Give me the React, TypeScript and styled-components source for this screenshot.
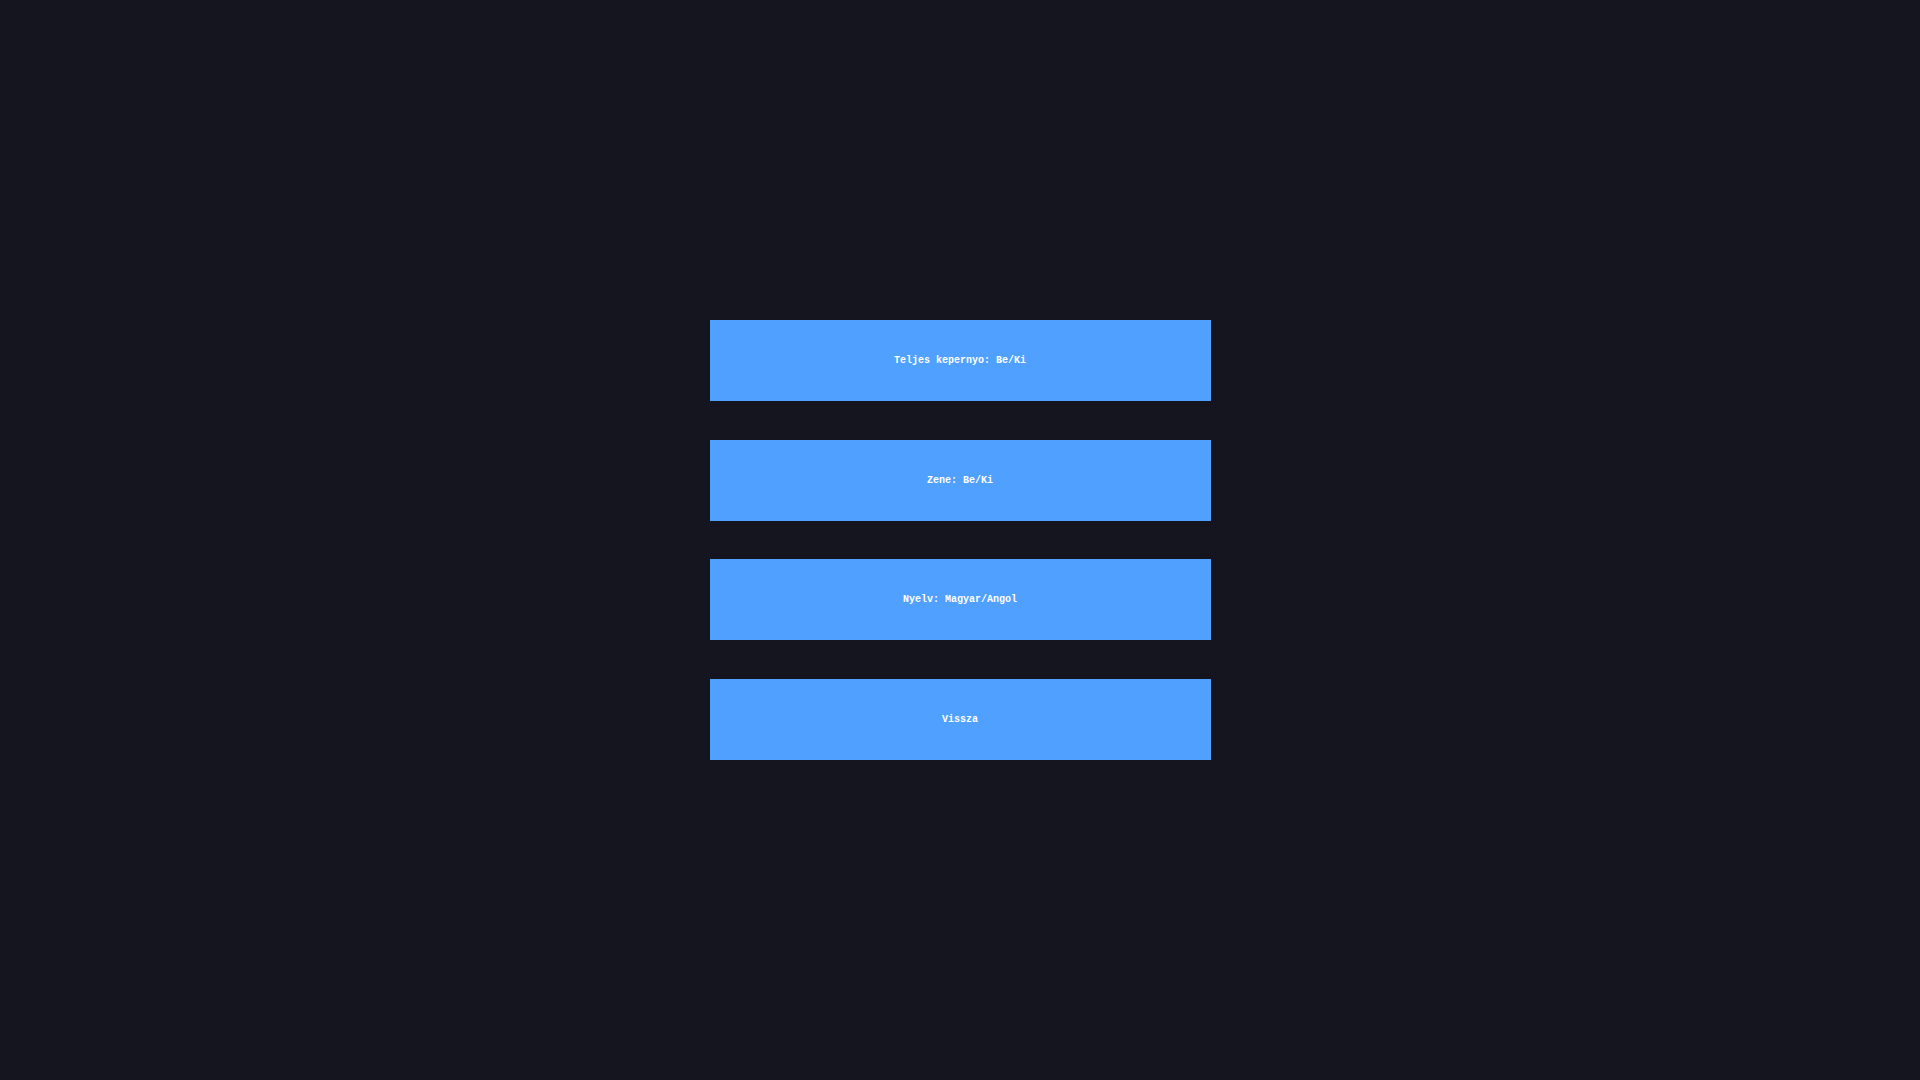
import React from "react";
import styled, { createGlobalStyle } from "styled-components";

const GlobalStyle = createGlobalStyle`
  html, body {
    margin: 0;
    padding: 0;
    background-color: #14151e;
  }
  #root {
    min-height: 100vh;
  }
`;

const Screen = styled.div`
  width: 100vw;
  height: 100vh;
  display: flex;
  align-items: center;
  justify-content: center;
  background-color: #14151e;
`;

const Menu = styled.div`
  display: flex;
  flex-direction: column;
  gap: 38.67px;
  width: 501px;
`;

const MenuButton = styled.button`
  height: 81px;
  width: 100%;
  border: none;
  border-radius: 0;
  background-color: #4fa0ff;
  color: #ffffff;
  font-family: "Liberation Mono", "Courier New", monospace;
  font-weight: bold;
  font-size: 10px;
  cursor: pointer;
  padding: 0;
`;

const items = [
  "Teljes kepernyo: Be/Ki",
  "Zene: Be/Ki",
  "Nyelv: Magyar/Angol",
  "Vissza",
];

const App: React.FC = () => {
  return (
    <>
      <GlobalStyle />
      <Screen>
        <Menu>
          {items.map((label) => (
            <MenuButton key={label}>{label}</MenuButton>
          ))}
        </Menu>
      </Screen>
    </>
  );
};

export default App;
